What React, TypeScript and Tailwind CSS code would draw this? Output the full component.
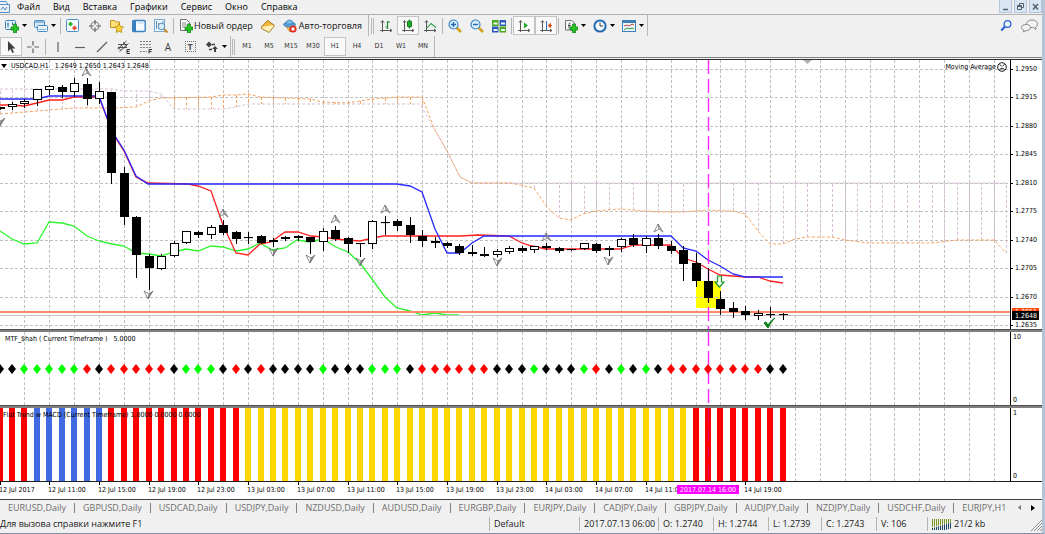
import React from "react";

const STEP = 12.43;
const barX = (i: number) => Math.round(STEP * i - 0.5);

const TAHOMA = "font-['DejaVu_Sans_Condensed','DejaVu_Sans',sans-serif]";

// [open/close top, open/close bottom, high, low, filled]
const candles: number[][] = [
  [107, 109, 107, 109, 0],
  [104, 107, 102, 109, 0],
  [101, 104, 99, 107, 0],
  [89, 100, 89, 105, 0],
  [86, 90, 85, 94, 0],
  [87, 92, 85, 97, 1],
  [83, 92, 78, 96, 0],
  [84, 99, 78, 104, 1],
  [91, 99, 82, 103, 0],
  [92, 173, 92, 183, 1],
  [173, 217, 167, 224, 1],
  [217, 255, 216, 277, 1],
  [256, 268, 254, 289, 1],
  [256, 269, 254, 269, 0],
  [243, 256, 241, 256, 0],
  [231, 243, 231, 243, 0],
  [232, 235, 231, 237, 1],
  [227, 235, 225, 238, 0],
  [225, 233, 220, 234, 1],
  [232, 239, 231, 243, 1],
  [237, 238, 232, 243, 1],
  [236, 243, 235, 243, 1],
  [240, 242, 238, 246, 0],
  [237, 239, 236, 240, 0],
  [236, 238, 235, 240, 1],
  [237, 242, 237, 253, 1],
  [231, 242, 228, 250, 0],
  [230, 239, 226, 240, 1],
  [238, 244, 237, 252, 1],
  [243, 244, 243, 256, 1],
  [221, 244, 220, 248, 0],
  [222, 223, 216, 234, 1],
  [221, 226, 219, 230, 1],
  [225, 235, 217, 242, 1],
  [236, 241, 230, 246, 1],
  [241, 243, 237, 247, 1],
  [243, 246, 242, 247, 1],
  [246, 253, 244, 254, 1],
  [252, 254, 245, 255, 1],
  [254, 256, 247, 256, 1],
  [251, 255, 249, 256, 0],
  [248, 252, 246, 253, 0],
  [248, 251, 246, 252, 1],
  [246, 250, 246, 252, 0],
  [246, 248, 243, 249, 1],
  [248, 251, 247, 252, 1],
  [249, 250, 249, 250, 0],
  [243, 249, 243, 249, 0],
  [244, 251, 243, 252, 1],
  [248, 250, 246, 255, 0],
  [239, 247, 238, 251, 0],
  [238, 245, 234, 246, 1],
  [238, 246, 236, 252, 0],
  [238, 246, 234, 248, 1],
  [246, 251, 241, 253, 1],
  [250, 264, 246, 280, 1],
  [263, 281, 253, 286, 1],
  [281, 298, 268, 302, 1],
  [299, 309, 291, 314, 1],
  [308, 312, 302, 317, 1],
  [311, 315, 306, 319, 1],
  [313, 316, 310, 319, 0],
  [314, 315, 307, 317, 1],
  [314, 315, 313, 319, 1],
];

const redLine =
  "0,105 12,105 24,106 37,103 49,100 62,100 74,97 99,97 107,118 115,137 124,151 136,177 148,183 188,184 198,186 211,191 223,225 236,253 248,255 260,244 271,242 285,232 298,232 311,236 323,237 335,239 347,240 360,241 373,238 383,236 460,236 478,235 509,236 522,243 532,246 546,249 620,249 634,245 671,245 683,258 696,262 708,269 720,275 733,276 745,277 758,277 770,281 783,283";
const blueLine =
  "0,99 37,99 49,96 99,96 107,118 115,136 124,150 136,176 148,184 397,184 410,186 422,192 435,229 447,253 460,253 472,243 484,236 671,236 683,248 696,251 708,260 720,266 733,274 745,277 783,277";
const greenLine =
  "0,231 12,239 24,244 37,243 49,222 62,223 74,226 87,236 99,241 112,244 124,246 136,253 149,254 161,256 174,252 186,249 198,251 211,246 223,247 236,251 248,249 260,243 272,250 285,248 297,240 310,242 323,239 336,247 348,252 360,263 372,279 385,297 397,308 410,311 422,315 435,313 447,315 459,315";
const spanA =
  "0,114 25,112 49,110 74,108 112,108 136,107 149,101 161,98 211,97 223,95 236,95 248,94 260,97 285,98 310,99 322,102 347,103 372,99 397,97 422,97 435,130 447,151 460,177 472,183 510,183 520,185 534,188 547,207 559,218 571,220 583,214 596,211 620,209 632,210 658,212 683,212 708,210 733,211 745,214 758,231 770,244 782,244 795,239 807,237 832,237 845,240 869,243 932,243 957,240 994,240 1006,253";
const spanB =
  "0,89 112,89 124,91 149,91 161,94 174,109 223,109 236,107 248,104 420,104 435,130 447,151 460,177 472,183 1007,183";

function valueAt(points: string, x: number) {
  const p = points.split(" ").map((s) => s.split(",").map(Number));
  for (let k = 1; k < p.length; k++) {
    if (x <= p[k][0]) {
      const [x0, y0] = p[k - 1];
      const [x1, y1] = p[k];
      return y0 + ((x - x0) / (x1 - x0)) * (y1 - y0);
    }
  }
  return p[p.length - 1][1];
}

const prices = ["1.2950", "1.2915", "1.2880", "1.2845", "1.2810", "1.2775", "1.2740", "1.2705", "1.2670", "1.2635"];
const priceY = (k: number) => Math.round(68.7 + 28.5 * k);

const signals = "KKGGGGGRKRRRRRKGGGKRKRKKKKGKKKGGGKRRRRRRKKKGKKKGRKGKGKRRRRRRRRKK";
const signalColors: Record<string, string> = { K: "#000", G: "#00ff00", R: "#ff0000" };

const times: [number, string][] = [
  [0, "12 Jul 2017"],
  [4, "12 Jul 11:00"],
  [8, "12 Jul 15:00"],
  [12, "12 Jul 19:00"],
  [16, "12 Jul 23:00"],
  [20, "13 Jul 03:00"],
  [24, "13 Jul 07:00"],
  [28, "13 Jul 11:00"],
  [32, "13 Jul 15:00"],
  [36, "13 Jul 19:00"],
  [40, "13 Jul 23:00"],
  [44, "14 Jul 03:00"],
  [48, "14 Jul 07:00"],
  [52, "14 Jul 11:00"],
  [60, "14 Jul 19:00"],
];

const upFractals = [[86, 72], [223, 213], [335, 219], [385, 209], [546, 237], [658, 228]];
const downFractals = [[0, 122], [148, 295], [273, 252], [310, 259], [360, 262], [497, 262], [608, 261]];

function GridColumns() {
  return (
    <g stroke="#c0c0c0" strokeDasharray="3 2">
      {Array.from({ length: 80 }, (_, k) => (
        <line key={k} x1={barX(2 * k + 2) + 0.5} x2={barX(2 * k + 2) + 0.5} y1="0" y2="100%" />
      ))}
    </g>
  );
}

function PriceChart() {
  return (
    <svg className={`block h-[269px] w-0 flex-1 bg-white text-[7px] ${TAHOMA}`}>
      <GridColumns />
      <g transform="translate(0 -60)">
        <rect x="696" y="281" width="25" height="27" fill="#ffff00" />
        <g stroke="#c0c0c0" strokeDasharray="3 2">
          {prices.map((p, k) => (
            <line key={p} x1="0" x2="100%" y1={priceY(k) + 0.5} y2={priceY(k) + 0.5} />
          ))}
        </g>
        <g strokeDasharray="3 2">
          {Array.from({ length: 82 }, (_, i) => {
            const x = barX(i);
            const a = valueAt(spanA, x);
            const b = valueAt(spanB, x);
            return <line key={i} x1={x + 0.5} x2={x + 0.5} y1={a} y2={b} stroke={a < b ? "#f4a460" : "#d8bfd8"} />;
          })}
        </g>
        <polyline points={spanB} fill="none" stroke="#d8bfd8" strokeDasharray="3 2" />
        <polyline points={spanA} fill="none" stroke="#f4a460" strokeDasharray="3 2" />
        <g fill="none" strokeWidth="1.300">
          <polyline points={greenLine} stroke="#2cf52c" />
          <polyline points={redLine} stroke="#ff2020" />
          <polyline points={blueLine} stroke="#2828ff" />
        </g>
        <rect x="0" y="311" width="100%" height="2" fill="#ff8c62" />
        <rect x="0" y="315" width="100%" height="1" fill="#c4c4c4" />
        <line x1="708.5" x2="708.5" y1="60" y2="329" stroke="#ff28ff" strokeWidth="1.400" strokeDasharray="14 5" />
        {candles.map(([top, bottom, high, low, filled], i) => {
          const x = barX(i);
          return (
            <g key={i} stroke="#000" fill={filled ? "#000" : "#fff"}>
              <line x1={x + 0.5} x2={x + 0.5} y1={high} y2={low + 1} />
              <rect x={x - 3.5} y={top + 0.5} width="8" height={Math.max(bottom - top - 1, 0.1)} />
            </g>
          );
        })}
        {upFractals.map(([x, y]) => (
          <path key={x} d={`M${x - 4} ${y + 4}L${x} ${y - 4}L${x + 5} ${y + 4}L${x + 1} ${y + 1}L${x} ${y - 4}M${x - 4} ${y + 4}L${x + 1} ${y + 1}`} fill="#c8c8c8" stroke="#6e6e6e" strokeWidth="0.8" />
        ))}
        {downFractals.map(([x, y]) => (
          <path key={x} d={`M${x - 4} ${y - 4}L${x} ${y + 4}L${x + 5} ${y - 4}L${x + 1} ${y - 1}L${x} ${y + 4}M${x - 4} ${y - 4}L${x + 1} ${y - 1}`} fill="#8c8c8c" stroke="#6e6e6e" strokeWidth="0.8" />
        ))}
        <path d="M717.500 276h4v6h2.500l-4.500 5-4.500-5h2.500z" fill="#f4fff0" stroke="#1e9632" strokeWidth="1.200" />
        <path d="M764 323l2-1 2 3c2-3 4-5 7-7-3 3-5 6-7 10z" fill="#0a7d14" stroke="#0a7d14" />
        <path d="M803 60h9l-4.500 4z" fill="#b0b0b0" />
        <path d="M1 64h6l-3 4z" />
        <text x="11" y="68">USDCAD,H1&nbsp;&nbsp; 1.2649 1.2650 1.2643 1.2648</text>
      </g>
      <svg x="100%" overflow="visible">
        <text x="-14" y="9" textAnchor="end">Moving Average</text>
        <g fill="none" stroke="#000" strokeWidth="0.900">
          <circle cx="-8" cy="7" r="4.300" />
          <path d="M-10.500 4.500l2 1.500M-5.500 4.500l-2 1.500M-10.500 9.500q2.500-3 5 0" />
        </g>
      </svg>
    </svg>
  );
}

function SignalPanel() {
  return (
    <svg className={`block h-[73px] w-0 flex-1 bg-white text-[7px] ${TAHOMA}`}>
      <GridColumns />
      <line x1="708.5" x2="708.5" y1="0" y2="73" stroke="#ff28ff" strokeWidth="1.400" strokeDasharray="14 5" />
      {signals.split("").map((s, i) => (
        <path key={i} d={`M${barX(i)} 32l4 5-4 5-4-5z`} fill={signalColors[s]} />
      ))}
      <text x="5" y="9">MTF_$hah ( Current Timeframe )&nbsp;&nbsp; 5.0000</text>
    </svg>
  );
}

function trendColor(i: number) {
  if (i > 2 && i < 9) return "#4169e1";
  if (i > 19 && i < 56) return "#ffd700";
  return "#ff0000";
}

function TrendPanel() {
  return (
    <svg className={`block h-[73px] w-0 flex-1 bg-white text-[7px] ${TAHOMA}`}>
      <GridColumns />
      {signals.split("").map((_, i) => (
        <rect key={i} x={barX(i) - 3} y="0" width="6" height="73" fill={trendColor(i)} />
      ))}
      <line x1="708.5" x2="708.5" y1="0" y2="73" stroke="#d80058" strokeDasharray="14 5" />
      <text x="3" y="9">Flat Trend w MACD (Current Timeframe) 1.0000 0.0000 0.0000</text>
    </svg>
  );
}

function PriceScale() {
  return (
    <svg className={`block h-[269px] w-8 border-l border-black bg-white text-[7px] ${TAHOMA}`}>
      {prices.map((p, k) => (
        <g key={p}>
          <rect x="0" y={priceY(k) - 60} width="2" height="1" />
          <text x="4" y={priceY(k) - 58}>{p}</text>
        </g>
      ))}
      <rect x="1" y="248" width="27" height="6" fill="#ff4500" />
      <text x="4" y="254" fill="#fff">1.2651</text>
      <rect x="1" y="251" width="27" height="9" />
      <text x="4" y="258" fill="#fff">1.2648</text>
    </svg>
  );
}

function RangeScale({ max }: { max: string }) {
  return (
    <div className={`flex w-8 flex-col justify-between border-l border-black bg-white pl-0.5 text-[7px] leading-[10px] ${TAHOMA}`}>
      <span>{max}</span>
      <span>0</span>
    </div>
  );
}

function TimeScale() {
  return (
    <svg className={`block h-[17px] w-full bg-white text-[7px] ${TAHOMA}`}>
      {times.map(([i, label]) => (
        <g key={label}>
          <rect x={barX(i)} y="0" width="1" height="3" />
          <text x={barX(i) - 1} y="10">{label}</text>
        </g>
      ))}
      <rect x="677" y="3" width="62" height="9" fill="#ff00ff" />
      <text x="708" y="10" fill="#fff" textAnchor="middle">2017.07.14 16:00</text>
    </svg>
  );
}

function Splitter() {
  return <div className="h-[3px] border-t border-[#505050] bg-[#808080]" />;
}

function Icon({ children }: { children: React.ReactNode }) {
  return (
    <svg className="h-[14px] w-[14px] shrink-0" viewBox="0 0 14 14" fill="none">
      {children}
    </svg>
  );
}

function Tool({ label, active, caret, children }: { label: string; active?: boolean; caret?: boolean; children: React.ReactNode }) {
  return (
    <button
      aria-label={label}
      className={`flex h-[19px] shrink-0 items-center justify-center gap-[3px] border ${caret ? "w-[29px]" : "w-[22px]"} ${
        active ? "border-[#c4c4c4] bg-[#f9f9f9]" : "border-transparent"
      }`}>
      {children}
      {caret && (
        <svg className="h-[3px] w-[5px]" viewBox="0 0 5 3">
          <path d="M0 0h5l-2.500 3z" />
        </svg>
      )}
    </button>
  );
}

function Sep() {
  return <div className="mx-px h-4 w-px shrink-0 bg-[#b4b4b4]" />;
}

function Grip() {
  return <div className="mx-px h-4 w-[3px] shrink-0 border-x border-[#b8b8b8]" />;
}

const plus = <path d="M8.500 5h3v3h2.500v3h-2.500v3h-3v-3h-2.500v-3h2.500z" fill="#24c424" stroke="#0e7a12" strokeWidth="0.700" />;
const axes = <path d="M3.500 2v11M1 11.500h12M2 3.500l1.500-2 1.500 2M11 10l2 1.500-2 1.500" stroke="#5a5a5a" />;

function MainToolbar() {
  return (
    <div className="flex h-[21px] items-center">
      <div className="flex h-full items-center border-r border-[#b8b8b8] pl-px">
        <Tool label="Новый график" caret>
          <Icon>
            <rect x="0.500" y="1.500" width="10" height="9" rx="1" fill="#e8f3fc" stroke="#3a80b8" />
            <path d="M3 3.500v5M2 5h2M7.500 3v3" stroke="#3a80b8" />
            {plus}
          </Icon>
        </Tool>
        <Tool label="Профили" caret>
          <Icon>
            <rect x="0.500" y="1.500" width="10" height="7" rx="1" fill="#d4e8f8" stroke="#4a8cc0" />
            <path d="M1 3h9" stroke="#4a8cc0" />
            <rect x="3.500" y="6.500" width="10" height="6" rx="1" fill="#e8f3fc" stroke="#4a8cc0" />
            <path d="M5 10.500h7" stroke="#8ab4d8" />
          </Icon>
        </Tool>
        <Sep />
        <Tool label="Обзор рынка">
          <Icon>
            <rect x="0.500" y="0.500" width="12" height="12" rx="1" fill="#f6fbff" stroke="#4a90c8" />
            <path d="M4.500 2.500l2.500 2.500-2.500 2.500-2.500-2.500z" fill="#28b428" />
            <path d="M8.500 6.500l2.500 2.500-2.500 2.500-2.500-2.500z" fill="#e84830" />
          </Icon>
        </Tool>
        <Tool label="Окно данных">
          <Icon>
            <circle cx="7" cy="7" r="4" stroke="#808080" strokeWidth="1.100" />
            <path d="M7 1v4.500M7 8.500v4.500M1 7h4.500M8.500 7h4.500" stroke="#606060" strokeWidth="1.200" />
          </Icon>
        </Tool>
        <Tool label="Навигатор">
          <Icon>
            <path d="M0.500 1.500h4l1 1.500h4v5.500h-9z" fill="#ffe27a" stroke="#c09020" />
            <path d="M9 4.500l1.500 3 3 .5-2.200 2.200.5 3.300-2.800-1.500-2.800 1.500.5-3.300-2.200-2.200 3-.5z" fill="#ffd23c" stroke="#b8860b" strokeWidth="0.800" />
          </Icon>
        </Tool>
        <Tool label="Терминал">
          <Icon>
            <rect x="0.700" y="1.500" width="12.500" height="11" rx="1" fill="#f4faff" stroke="#3a80c0" strokeWidth="1.400" />
            <path d="M1 2h3v10h-3z" fill="#3a80c0" />
            <path d="M5.500 4h6" stroke="#b0d0e8" />
          </Icon>
        </Tool>
        <Tool label="Тестер стратегий">
          <Icon>
            <rect x="0.500" y="0.500" width="10" height="12" fill="#f0f7fd" stroke="#7aa8d0" />
            <path d="M2.500 2v8M4.500 4v6M9 2v2" stroke="#5a90c0" />
            <path d="M10 10l3.500 3.500" stroke="#c89028" strokeWidth="2" />
            <circle cx="7.500" cy="7.500" r="3.300" fill="#d4ecfc" stroke="#5a8ab0" />
          </Icon>
        </Tool>
        <Sep />
        <button className="ml-1 flex h-[19px] items-center gap-px whitespace-nowrap text-[9px] text-[#101010]">
          <Icon>
            <path d="M1.500 0.500h6l3 3v8h-9z" fill="#fafafa" stroke="#707070" />
            <path d="M3 4h4M3 6h5M3 8h3" stroke="#909090" />
            {plus}
          </Icon>
          Новый ордер
        </button>
        <div className="ml-1 flex">
          <Tool label="MetaEditor">
            <Icon>
              <path d="M0.500 8l6-6.500 6.500 4.500-5 6z" fill="#f4b93c" stroke="#a87010" />
              <path d="M0.500 8v1.500l7.500 4 5-6v-1.500" fill="#fff0c0" stroke="#a87010" strokeWidth="0.900" />
            </Icon>
          </Tool>
        </div>
        <button className="ml-1 mr-1.5 flex h-[19px] items-center gap-0.5 whitespace-nowrap text-[9px] text-[#101010]">
          <Icon>
            <path d="M2 6l5 7 5-7z" fill="#f0c050" stroke="#b08020" strokeWidth="0.700" />
            <ellipse cx="6.500" cy="5.500" rx="6" ry="2.500" fill="#5aa8dc" stroke="#2870a8" strokeWidth="0.700" />
            <path d="M3 5q0-4 3.500-4t3.500 4z" fill="#7cc0ec" stroke="#2870a8" strokeWidth="0.700" />
            <circle cx="10" cy="10" r="3.600" fill="#e02818" />
            <rect x="8.500" y="8.500" width="3" height="3" fill="#fff" />
          </Icon>
          Авто-торговля
        </button>
      </div>
      <div className="flex h-full items-center border-r border-[#b8b8b8] pl-px">
        <Grip />
        <Tool label="Бары">
          <Icon>
            {axes}
            <path d="M8.500 2v8M8.500 3h2.500M6.500 8h2" stroke="#1c8c2c" strokeWidth="1.200" />
          </Icon>
        </Tool>
        <Tool label="Японские свечи" active>
          <Icon>
            {axes}
            <path d="M8.500 0.500v9" stroke="#0e7a1c" />
            <rect x="6.500" y="2" width="4" height="6" rx="1" fill="#1cae2c" stroke="#0e7a1c" />
          </Icon>
        </Tool>
        <Tool label="Линия">
          <Icon>
            {axes}
            <path d="M4 9l4-4.500 5 4" stroke="#2aa040" strokeWidth="1.100" />
          </Icon>
        </Tool>
        <Sep />
        <Tool label="Увеличить">
          <Icon>
            <path d="M8.500 8.500l4.500 4.500" stroke="#d8a020" strokeWidth="2.600" />
            <circle cx="5.500" cy="5.500" r="4.500" fill="#d8effc" stroke="#3a84c4" strokeWidth="1.200" />
            <path d="M5.500 3v5M3 5.500h5" stroke="#2468b0" strokeWidth="1.400" />
          </Icon>
        </Tool>
        <Tool label="Уменьшить">
          <Icon>
            <path d="M8.500 8.500l4.500 4.500" stroke="#d8a020" strokeWidth="2.600" />
            <circle cx="5.500" cy="5.500" r="4.500" fill="#d8effc" stroke="#3a84c4" strokeWidth="1.200" />
            <path d="M3 5.500h5" stroke="#2468b0" strokeWidth="1.400" />
          </Icon>
        </Tool>
        <Tool label="Расположить окна">
          <Icon>
            <path d="M0 1h6.500v6h-6.500zM7.500 7.500h6.500v6h-6.500z" fill="#4aa81c" />
            <path d="M7.500 1h6.500v6h-6.500zM0 7.500h6.500v6h-6.500z" fill="#2c5ab4" />
            <path d="M1.500 3.500h4v2h-4zM9 3.500h4v2h-4zM1.500 10h4v2h-4zM9 10h4v2h-4z" fill="#f0f8ff" />
          </Icon>
        </Tool>
        <Sep />
        <Tool label="Автопрокрутка" active>
          <Icon>
            {axes}
            <path d="M7 3.500v6l4-3z" fill="#1cae2c" />
          </Icon>
        </Tool>
        <Tool label="Сдвиг графика" active>
          <Icon>
            {axes}
            <path d="M7.500 2v9" stroke="#3070b0" />
            <path d="M13 6.500h-3M11.500 4.500l-2.500 2 2.500 2z" fill="#e05020" stroke="#e05020" />
          </Icon>
        </Tool>
        <Sep />
        <Tool label="Индикаторы" caret>
          <Icon>
            <path d="M1.500 1.500h6l3 2.500v7h-9z" fill="#f8f8f8" stroke="#707070" />
            <path d="M6.500 4q-1.500-.5-1.500 1.500v4M4 6.500h3" stroke="#505050" />
            {plus}
          </Icon>
        </Tool>
        <Tool label="Периоды" caret>
          <Icon>
            <circle cx="7" cy="7" r="5.600" fill="#f2f9ff" stroke="#2468b4" strokeWidth="2" />
            <path d="M7 3.500v3.500h3" stroke="#404040" />
          </Icon>
        </Tool>
        <Tool label="Шаблоны" caret>
          <Icon>
            <rect x="0.500" y="1.500" width="13" height="11" fill="#eef6fd" stroke="#4080b8" />
            <path d="M1 3h12" stroke="#4080b8" strokeWidth="2" />
            <path d="M2 7l3-1 2 1 3-2 2 1" stroke="#c04030" />
            <path d="M2 11l3-2 2 1 3-1 2 1" stroke="#30943c" />
          </Icon>
        </Tool>
      </div>
      <div className="ml-auto flex items-center gap-2 pr-1">
        <button aria-label="Поиск">
          <Icon>
            <circle cx="8.500" cy="5" r="3.400" fill="#e8f4ff" stroke="#2a62cc" strokeWidth="1.300" />
            <path d="M5.800 7.800l-3.500 3.700" stroke="#2a62cc" strokeWidth="2.200" />
          </Icon>
        </button>
        <button aria-label="Чат">
          <svg className="h-[14px] w-[17px]" viewBox="0 0 17 14" fill="#f4f4f4" stroke="#8a8a8a">
            <path d="M11 1c3 0 5.500 1.500 5.500 4 0 1.500-1 2.800-2 3.200l.5 2.300-2.500-2c-4 .5-7-1-7-3.500s2.500-4 5.500-4z" />
            <path d="M5 5.500c2.500 0 4.500 1 4.500 3s-2 3-4.500 3l-2.500 1.500.3-2c-1.300-.5-2.300-1.200-2.300-2.500 0-2 2-3 4.500-3z" />
          </svg>
        </button>
      </div>
    </div>
  );
}

const periods = ["M1", "M5", "M15", "M30", "H1", "H4", "D1", "W1", "MN"];

function DrawToolbar() {
  return (
    <div className="flex h-[21px] items-center">
      <div className="flex h-full items-center border-r border-[#b8b8b8]">
        <Tool label="Курсор" active>
          <Icon>
            <path d="M4 1v10.500l2.500-2.500 1.800 4 1.700-.8-1.800-3.700h3.300z" fill="#404040" />
          </Icon>
        </Tool>
        <Tool label="Перекрестие">
          <Icon>
            <path d="M7 1v4.500M7 8.500v4.500M1 7h4.500M8.500 7h4.500" stroke="#606060" strokeWidth="1.200" />
          </Icon>
        </Tool>
        <Sep />
        <Tool label="Вертикальная линия">
          <Icon><path d="M7 2v10" stroke="#606060" strokeWidth="1.200" /></Icon>
        </Tool>
        <Tool label="Горизонтальная линия">
          <Icon><path d="M2 7.500h10" stroke="#606060" strokeWidth="1.200" /></Icon>
        </Tool>
        <Tool label="Трендовая линия">
          <Icon><path d="M2 12l10-10" stroke="#606060" strokeWidth="1.200" /></Icon>
        </Tool>
        <Tool label="Равноудаленный канал">
          <Icon>
            <path d="M0.500 9l9-8M2.500 11.500l9-8M1 7l3 4M3.500 4.500l3.500 4M6.500 2l3 4.500M1 4.500h9M1 7.500h9" stroke="#505050" />
            <path d="M13 9.500h-3v4h3M10 11.500h2.500" stroke="#303030" />
          </Icon>
        </Tool>
        <Tool label="Линии Фибоначчи">
          <Icon>
            <path d="M1 1.500h12M1 4.500h12M1 7.500h12M1 11.500h7" stroke="#808080" strokeDasharray="2 1" />
            <path d="M10 13.500v-4h3M10 11.500h2.500" stroke="#303030" />
          </Icon>
        </Tool>
        <Tool label="Текст">
          <span className="text-[10px] leading-3 text-[#404040]">A</span>
        </Tool>
        <Tool label="Текстовая метка">
          <span className="h-[11px] w-[11px] border border-dotted border-[#707070] text-center text-[9px] font-bold leading-[9px] text-[#505050]">T</span>
        </Tool>
        <Tool label="Стрелки" caret>
          <Icon>
            <path d="M4 1.500l3 3-3 3-3-3z" fill="#404040" />
            <path d="M10 6l3 3h-2v3h-2v-3h-2z" fill="#404040" />
            <path d="M7 4.500h3M4 9.500h3" stroke="#404040" strokeWidth="1.300" />
          </Icon>
        </Tool>
      </div>
      <div className={`flex h-full items-center border-r border-[#b8b8b8] text-[7px] text-[#303030] ${TAHOMA}`}>
        <Grip />
        {periods.map((p) => (
          <Tool key={p} label={p} active={p === "H1"}>{p}</Tool>
        ))}
      </div>
    </div>
  );
}

const menu = ["Файл", "Вид", "Вставка", "Графики", "Сервис", "Окно", "Справка"];

function MenuBar() {
  return (
    <div className="flex h-[15px] items-center border-b border-[#b0b0b0] text-[9px] leading-3">
      <svg className="h-3 w-[10px]" viewBox="0 0 10 12" fill="none" stroke="#5090d0">
        <path d="M0 3.500h9.500v8h-9.500M0 0.500h6l2 3M1 9l2-3 2 3 2-3" />
      </svg>
      {menu.map((m) => (
        <button key={m} className="pl-[7px] pr-[6px]">{m}</button>
      ))}
      <div className="ml-auto flex h-full gap-0.5">
        <WindowButton label="Свернуть"><path d="M3 8.500h5" strokeWidth="1.500" /></WindowButton>
        <WindowButton label="Восстановить"><path d="M4.500 4.500v-2h4v4h-2M2.500 4.500h4v4h-4zM2.500 5.500h4" /></WindowButton>
        <WindowButton label="Закрыть"><path d="M3 3l5 5.500M8 3l-5 5.500" strokeWidth="1.500" /></WindowButton>
      </div>
    </div>
  );
}

function WindowButton({ label, children }: { label: string; children: React.ReactNode }) {
  return (
    <button aria-label={label} className="h-[13px] w-[13px] border border-t-0 border-[#b4c6d8] bg-[#d8e6f4]">
      <svg className="h-[11px] w-[11px]" viewBox="0 0 11 11" fill="none" stroke="#50606e">
        {children}
      </svg>
    </button>
  );
}

const tabs = [
  "EURUSD,Daily", "GBPUSD,Daily", "USDCAD,Daily", "USDJPY,Daily", "NZDUSD,Daily", "AUDUSD,Daily", "EURGBP,Daily",
  "EURJPY,Daily", "CADJPY,Daily", "GBPJPY,Daily", "AUDJPY,Daily", "NZDJPY,Daily", "USDCHF,Daily", "EURJPY,H1",
];

function ChartTabs() {
  return (
    <div className="flex h-4 items-center border-t border-[#404040] text-[9px] leading-3 text-[#6e6e6e]">
      <div className="flex w-0 flex-1 overflow-hidden">
        {tabs.map((t) => (
          <button key={t} className="flex shrink-0 items-center pl-2">
            {t}
            {t !== "EURJPY,H1" && <span className="ml-2 h-[10px] w-px bg-[#808080]" />}
          </button>
        ))}
      </div>
      <button aria-label="Назад" className="w-[14px]">
        <svg className="mx-auto h-[5px] w-[3px]" viewBox="0 0 3 5"><path d="M3 0v5l-3-2.500z" fill="#707070" /></svg>
      </button>
      <button aria-label="Вперед" className="mr-0.5 w-[14px]">
        <svg className="mx-auto h-[6px] w-[4px]" viewBox="0 0 4 6"><path d="M0 0v6l4-3z" /></svg>
      </button>
    </div>
  );
}

const cell = "shrink-0 border-l border-[#b4b4b4] pl-1";

function StatusBar() {
  return (
    <div className="flex h-[18px] items-center overflow-hidden whitespace-nowrap text-[9px] leading-[14px] text-[#202020]">
      <div className="flex-1">Для вызова справки нажмите F1</div>
      <div className={`w-[90px] ${cell}`}>Default</div>
      <div className={`w-[79px] ${cell}`}>2017.07.13 06:00</div>
      <div className={`w-[55px] ${cell}`}>O: 1.2740</div>
      <div className={`w-[55px] ${cell}`}>H: 1.2744</div>
      <div className={`w-[53px] ${cell}`}>L: 1.2739</div>
      <div className={`w-[55px] ${cell}`}>C: 1.2743</div>
      <div className={`w-[51px] ${cell}`}>V: 106</div>
      <div className={`flex w-[115px] items-center gap-[3px] ${cell}`}>
        <svg className="h-[11px] w-[19px]" viewBox="0 0 19 11">
          {Array.from({ length: 10 }, (_, k) => (
            <g key={k}>
              <rect x={k * 2} y="0" width="1" height={8 - k * 0.5} fill="#7a9420" />
              <rect x={k * 2} y={9 - k * 0.6} width="1" height="6" fill="#1c4468" />
            </g>
          ))}
        </svg>
        21/2 kb
        <svg className="ml-auto h-[11px] w-[11px] self-end" viewBox="0 0 11 11" stroke="#909090">
          <path d="M0 11l11-11M3 11l8-8M6 11l5-5M9 11l2-2" />
        </svg>
      </div>
    </div>
  );
}

function App() {
  return (
    <div className="overflow-hidden border-b border-r-[3px] border-b-[#8090a4] border-r-[#b4c4d6] bg-[#f0f0f0] font-['Open_Sans','Noto_Sans',sans-serif] text-black">
      <MenuBar />
      <MainToolbar />
      <DrawToolbar />
      <div className="border-t border-[#808080] pt-px">
        <div className="flex border-t border-[#303030]">
          <PriceChart />
          <PriceScale />
        </div>
        <Splitter />
        <div className="flex">
          <SignalPanel />
          <RangeScale max="10" />
        </div>
        <Splitter />
        <div className="flex border-b border-[#202020]">
          <TrendPanel />
          <RangeScale max="1" />
        </div>
        <TimeScale />
      </div>
      <ChartTabs />
      <StatusBar />
    </div>
  );
}

export default App;
